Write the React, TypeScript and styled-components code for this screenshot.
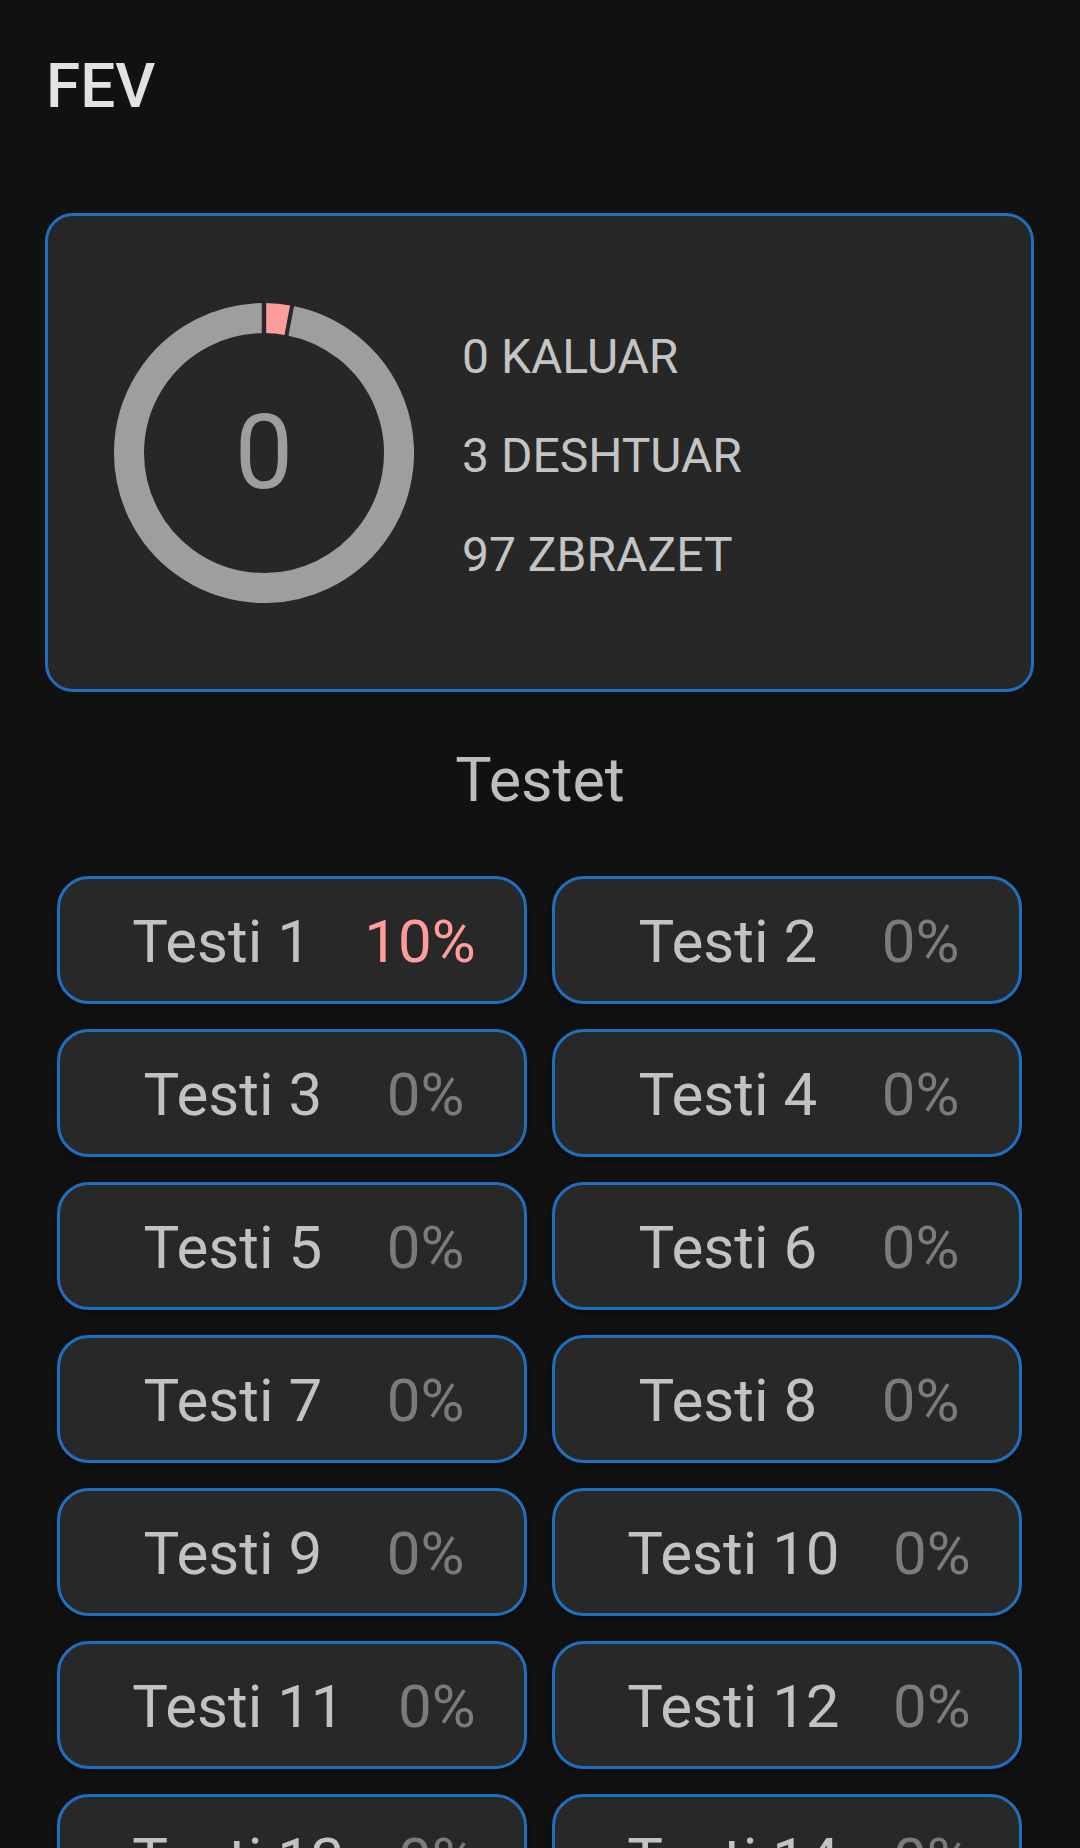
import React from "react";
import styled, { createGlobalStyle } from "styled-components";

const GlobalStyle = createGlobalStyle`
  html, body {
    margin: 0;
    padding: 0;
    background: #111111;
    overflow: hidden;
  }
  body {
    font-family: Roboto, "Noto Sans", "Liberation Sans", sans-serif;
  }
  * { box-sizing: border-box; }
`;

const Page = styled.div`
  width: 1080px;
  min-height: 1848px;
  background: #111111;
  display: flex;
  flex-direction: column;
`;

const Header = styled.header`
  padding: 55px 0 0 46px;
`;

const Title = styled.h1`
  margin: 0;
  font-size: 62px;
  line-height: 1;
  font-weight: 500;
  color: #e2e2e2;
`;

const SummaryCard = styled.section`
  margin: 96px 46px 0 45px;
  height: 479px;
  border: 3px solid #1f6fc0;
  border-radius: 28px;
  background: #272727;
  padding: 87px 66px 86px 66px;
  display: flex;
  align-items: center;
  gap: 48px;
`;

const Donut = styled.div`
  display: grid;
  width: 300px;
  height: 300px;
  place-items: center;
  & > * {
    grid-area: 1 / 1;
  }
`;

const DonutValue = styled.span`
  font-size: 104px;
  line-height: 1;
  font-weight: 400;
  color: #9e9e9e;
`;

const Legend = styled.ul`
  list-style: none;
  margin: 5px 0 0 0;
  padding: 0;
  display: flex;
  flex-direction: column;
`;

const LegendItem = styled.li`
  font-size: 48px;
  line-height: 99px;
  color: #c4c4c4;
  white-space: nowrap;
`;

const SectionTitle = styled.h2`
  margin: 58px 0 0 0;
  font-size: 61px;
  line-height: 1;
  font-weight: 400;
  color: #bdbdbd;
  text-align: center;
`;

const TestGrid = styled.div`
  margin-top: 65px;
  padding: 0 58px 0 57px;
  display: grid;
  grid-template-columns: 1fr 1fr;
  column-gap: 25px;
  row-gap: 25px;
`;

const TestButton = styled.button`
  height: 128px;
  border: 3px solid #1f6fc0;
  border-radius: 32px;
  background: #282828;
  box-shadow: 0 2px 6px rgba(0, 0, 0, 0.45);
  display: flex;
  align-items: center;
  justify-content: space-evenly;
  padding: 3px 0 0 24px;
  font-family: Roboto, "Noto Sans", "Liberation Sans", sans-serif;
  cursor: pointer;
`;

const TestLabel = styled.span`
  font-size: 60px;
  line-height: 1;
  color: #c2c2c2;
  white-space: nowrap;
`;

const TestPercent = styled.span<{ $active: boolean }>`
  font-size: 60px;
  line-height: 1;
  padding-left: 5px;
  color: ${(p) => (p.$active ? "#ff9c9c" : "#7b7b7b")};
  white-space: nowrap;
`;

const DonutChart: React.FC = () => {
  const r = 135;
  const c = 150;
  const pinkEnd = (3 / 100) * 360;
  const rad = (d: number) => (d * Math.PI) / 180;
  const pt = (radius: number, deg: number) =>
    [c + radius * Math.sin(rad(deg)), c - radius * Math.cos(rad(deg))] as const;
  const [ex, ey] = pt(r, pinkEnd);
  const [g1x, g1y] = pt(114, pinkEnd);
  const [g2x, g2y] = pt(152, pinkEnd);
  return (
    <svg width="300" height="300" viewBox="0 0 300 300">
      <path
        d={`M${c} ${c - r} A${r} ${r} 0 0 1 ${ex} ${ey}`}
        fill="none"
        stroke="#ff9c9c"
        strokeWidth={30}
      />
      <path
        d={`M${ex} ${ey} A${r} ${r} 0 1 1 ${c} ${c - r}`}
        fill="none"
        stroke="#9e9e9e"
        strokeWidth={30}
      />
      <line x1={c} y1={-2} x2={c} y2={36} stroke="#272727" strokeWidth={4.4} />
      <line x1={g1x} y1={g1y} x2={g2x} y2={g2y} stroke="#272727" strokeWidth={4} />
    </svg>
  );
};

const tests = Array.from({ length: 14 }, (_, i) => ({
  name: `Testi ${i + 1}`,
  percent: i === 0 ? 10 : 0,
}));

export default function App() {
  return (
    <>
      <GlobalStyle />
      <Page>
        <Header>
          <Title>FEV</Title>
        </Header>
        <SummaryCard>
          <Donut>
            <DonutChart />
            <DonutValue>0</DonutValue>
          </Donut>
          <Legend>
            <LegendItem>0 KALUAR</LegendItem>
            <LegendItem>3 DESHTUAR</LegendItem>
            <LegendItem>97 ZBRAZET</LegendItem>
          </Legend>
        </SummaryCard>
        <SectionTitle>Testet</SectionTitle>
        <TestGrid>
          {tests.map((t) => (
            <TestButton key={t.name}>
              <TestLabel>{t.name}</TestLabel>
              <TestPercent $active={t.percent > 0}>{t.percent}%</TestPercent>
            </TestButton>
          ))}
        </TestGrid>
      </Page>
    </>
  );
}
